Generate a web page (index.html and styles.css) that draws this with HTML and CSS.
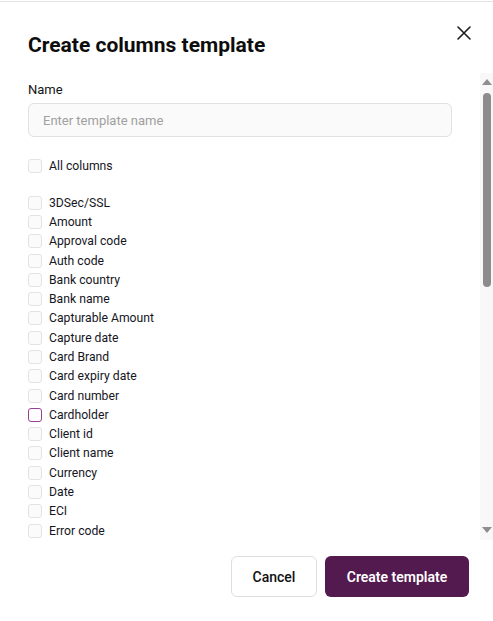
FILE: index.html
```html
<!DOCTYPE html>
<html lang="en">
<head>
<meta charset="utf-8">
<title>Create columns template</title>
<link rel="stylesheet" href="styles.css">
</head>
<body>
<div class="topline"></div>
<div class="dialog">
  <div class="header">
    <h1 class="title">Create columns template</h1>
    <button class="close" aria-label="Close">
      <svg width="14" height="14" viewBox="0 0 14 14"><path d="M1 1 L13 13 M13 1 L1 13" stroke="#1c1c1c" stroke-width="1.6" stroke-linecap="round" fill="none"/></svg>
    </button>
  </div>
  <div class="body">
    <div class="scroll">
      <label class="label" for="tname">Name</label>
      <input id="tname" class="input" type="text" placeholder="Enter template name">
      <div class="row all"><span class="box"></span><span class="text">All columns</span></div>
      <div class="list">
        <div class="row"><span class="box"></span><span class="text">3DSec/SSL</span></div>
        <div class="row"><span class="box"></span><span class="text">Amount</span></div>
        <div class="row"><span class="box"></span><span class="text">Approval code</span></div>
        <div class="row"><span class="box"></span><span class="text">Auth code</span></div>
        <div class="row"><span class="box"></span><span class="text">Bank country</span></div>
        <div class="row"><span class="box"></span><span class="text">Bank name</span></div>
        <div class="row"><span class="box"></span><span class="text">Capturable Amount</span></div>
        <div class="row"><span class="box"></span><span class="text">Capture date</span></div>
        <div class="row"><span class="box"></span><span class="text">Card Brand</span></div>
        <div class="row"><span class="box"></span><span class="text">Card expiry date</span></div>
        <div class="row"><span class="box"></span><span class="text">Card number</span></div>
        <div class="row"><span class="box hover"></span><span class="text">Cardholder</span></div>
        <div class="row"><span class="box"></span><span class="text">Client id</span></div>
        <div class="row"><span class="box"></span><span class="text">Client name</span></div>
        <div class="row"><span class="box"></span><span class="text">Currency</span></div>
        <div class="row"><span class="box"></span><span class="text">Date</span></div>
        <div class="row"><span class="box"></span><span class="text">ECI</span></div>
        <div class="row"><span class="box"></span><span class="text">Error code</span></div>
      </div>
    </div>
    <div class="scrollbar">
      <span class="arrow up"></span>
      <span class="thumb"></span>
      <span class="spacer"></span>
      <span class="arrow down"></span>
    </div>
  </div>
  <div class="footer">
    <button class="btn cancel">Cancel</button>
    <button class="btn primary">Create template</button>
  </div>
</div>
</body>
</html>
```
FILE: styles.css
```css
* { box-sizing: border-box; }
html, body { margin: 0; padding: 0; background: #fff; }
body {
  font-family: Roboto, "Liberation Sans", Arial, sans-serif;
  color: #161616;
  padding-top: 1px;
}
.topline { height: 1px; background: #e2e2e2; }
.dialog { display: flex; flex-direction: column; }
.header {
  display: flex;
  justify-content: space-between;
  align-items: flex-start;
  height: 71px;
  padding: 0 17px 0 28px;
}
.title {
  margin: 31px 0 0;
  font-size: 21px;
  line-height: 24px;
  font-weight: 700;
  color: #0d0d0d;
}
.close {
  margin-top: 19px;
  width: 24px;
  height: 24px;
  padding: 0;
  border: 0;
  background: none;
  display: flex;
  align-items: center;
  justify-content: center;
}
.body {
  display: flex;
  height: 467px;
}
.scroll {
  flex: 1;
  overflow: hidden;
  padding: 9px 28px 0 28px;
  display: flex;
  flex-direction: column;
}
.label {
  font-size: 13px;
  line-height: 16px;
  color: #141414;
}
.input {
  margin-top: 5px;
  height: 34px;
  width: 424px;
  flex: none;
  border: 1px solid #e1e1e1;
  border-radius: 6px;
  background: #fafafa;
  padding: 0 14px;
  font-family: inherit;
  font-size: 13px;
  color: #333;
  outline: none;
}
.input::placeholder { color: #a0a0a0; }
.row {
  display: flex;
  align-items: center;
  gap: 7px;
  height: 19.3px;
  flex: none;
  font-size: 12.2px;
  color: #16161e;
}
.all { margin-top: 19.5px; }
.list { margin-top: 17.2px; display: flex; flex-direction: column; flex: none; }
.box {
  width: 14px;
  height: 14px;
  flex: none;
  border: 1px solid #e3e3e3;
  border-radius: 3px;
  background: #fbfbfb;
}
.box.hover { border-color: #9a3f97; background: #fff; }
.scrollbar {
  width: 13px;
  flex: none;
  background: #f8f8f8;
  display: flex;
  flex-direction: column;
  align-items: center;
  padding: 4px 0 4px 1px;
}
.arrow {
  width: 0;
  height: 0;
  border-left: 5px solid transparent;
  border-right: 5px solid transparent;
  flex: none;
}
.arrow.up { border-bottom: 6px solid #8e8e8e; margin-top: 2px; }
.arrow.down { border-top: 6px solid #8e8e8e; margin-bottom: 3px; }
.thumb {
  width: 8px;
  height: 194px;
  margin-top: 8px;
  border-radius: 4px;
  background: #8c8c8c;
  flex: none;
}
.spacer { flex: 1; }
.footer {
  display: flex;
  justify-content: flex-end;
  gap: 8px;
  padding: 16px 24px 0 0;
}
.btn {
  height: 41px;
  border-radius: 6px;
  font-family: inherit;
  font-size: 14px;
  font-weight: 500;
  cursor: pointer;
}
.cancel {
  width: 86px;
  background: #fff;
  border: 1px solid #dedede;
  color: #111;
}
.primary {
  width: 144px;
  background: #531a50;
  border: 0;
  color: #fff;
  font-weight: 600;
}
```
